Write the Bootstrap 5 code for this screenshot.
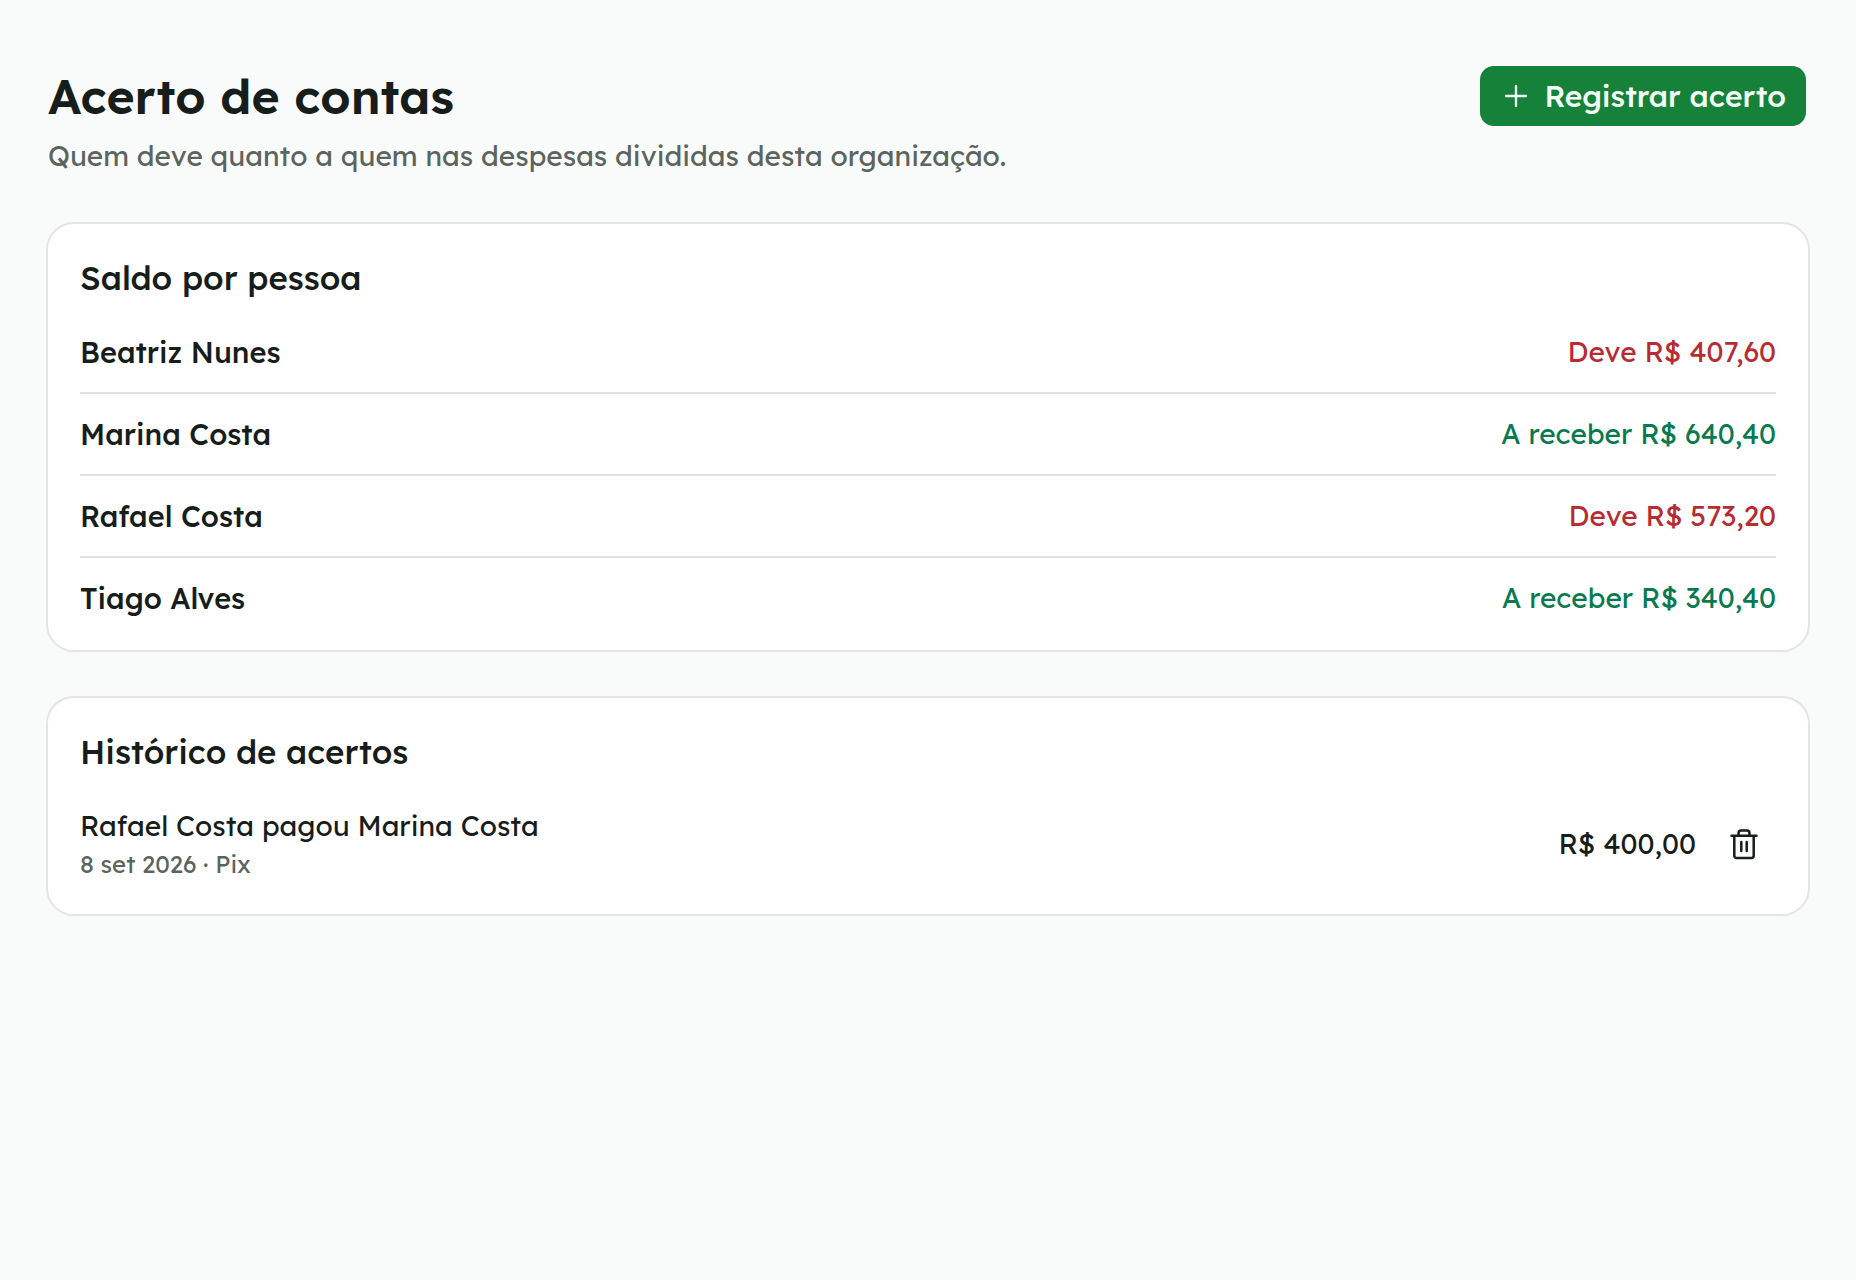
<!DOCTYPE html>
<html lang="pt-BR">
<head>
<meta charset="utf-8">
<meta name="viewport" content="width=device-width, initial-scale=1">
<title>Acerto de contas</title>
<link href="https://cdn.jsdelivr.net/npm/bootstrap@5.3.0/dist/css/bootstrap.min.css" rel="stylesheet">
<style>
  body { background: #f9fbfa; color: #161d1a; font-family: Lexend, Inter, sans-serif; font-size: 28px; line-height: 40px; }
  .page { padding: 66px 46px; }
  .page-head { padding: 0 4px 0 2px; margin-bottom: 46px; }
  .page-title { font-size: 48px; line-height: 60px; font-weight: 600; margin-bottom: 10px; }
  .muted { color: #5c645f; }
  .btn-brand { --bs-btn-color: #f4fff7; --bs-btn-bg: #158139; --bs-btn-hover-color: #fff; --bs-btn-hover-bg: #116c2f; --bs-btn-active-bg: #0e5c28; --bs-btn-active-color: #fff;
    border: 0; border-radius: 14px; padding: 10px 20px; font-size: 30px; line-height: 40px; font-weight: 500; gap: 12px; }
  .panel { --bs-card-border-color: #e2e5e3; --bs-card-border-width: 2px; --bs-card-border-radius: 28px; --bs-card-color: #161d1a; padding: 32px; }
  .panel + .panel { margin-top: 44px; }
  .panel-title { font-size: 33px; line-height: 44px; font-weight: 500; margin-bottom: 32px; }
  .person { padding-bottom: 20px; border-bottom: 2px solid #e0e2e1; margin-bottom: 20px; }
  .person:last-child { padding-bottom: 0; border: 0; margin-bottom: 0; }
  .person-name { font-size: 29px; font-weight: 500; }
  .owes { color: #b72c32; }
  .gets { color: #087a50; }
  .meta { font-size: 24px; line-height: 36px; }
  .btn-trash { width: 64px; height: 64px; padding: 0; border: 0; color: #161d1a; }
</style>
</head>
<body>
<main class="page container-fluid">
  <header class="page-head d-flex justify-content-between align-items-start gap-4">
    <div>
      <h1 class="page-title">Acerto de contas</h1>
      <p class="muted mb-0">Quem deve quanto a quem nas despesas divididas desta organização.</p>
    </div>
    <button type="button" class="btn btn-brand d-flex align-items-center flex-shrink-0">
      <svg width="32" height="32" viewBox="0 0 32 32" fill="none" stroke="currentColor" stroke-width="2.3" stroke-linecap="round" aria-hidden="true"><path d="M16 6v20M6 16h20"/></svg>
      Registrar acerto
    </button>
  </header>

  <section class="card panel">
    <h2 class="panel-title">Saldo por pessoa</h2>
    <ul class="list-unstyled mb-0">
      <li class="person d-flex justify-content-between"><span class="person-name">Beatriz Nunes</span><span class="owes">Deve R$ 407,60</span></li>
      <li class="person d-flex justify-content-between"><span class="person-name">Marina Costa</span><span class="gets">A receber R$ 640,40</span></li>
      <li class="person d-flex justify-content-between"><span class="person-name">Rafael Costa</span><span class="owes">Deve R$ 573,20</span></li>
      <li class="person d-flex justify-content-between"><span class="person-name">Tiago Alves</span><span class="gets">A receber R$ 340,40</span></li>
    </ul>
  </section>

  <section class="card panel">
    <h2 class="panel-title">Histórico de acertos</h2>
    <div class="d-flex justify-content-between align-items-center">
      <div>
        <div>Rafael Costa pagou Marina Costa</div>
        <div class="meta muted">8 set 2026 · Pix</div>
      </div>
      <div class="d-flex align-items-center gap-3">
        <span>R$ 400,00</span>
        <button type="button" class="btn btn-trash d-flex align-items-center justify-content-center" aria-label="Excluir acerto">
          <svg width="32" height="32" viewBox="0 0 32 32" fill="none" stroke="currentColor" stroke-width="2.5" stroke-linecap="round" stroke-linejoin="round" aria-hidden="true"><path d="M3.5 7.7h25M6.3 7.7v20.1a2.2 2.2 0 0 0 2.2 2.2h15a2.2 2.2 0 0 0 2.2-2.2V7.7M10.5 7.7V5.2a2.7 2.7 0 0 1 2.7-2.7h5.6a2.7 2.7 0 0 1 2.7 2.7v2.5M13.3 14v9M18.7 14v9"/></svg>
        </button>
      </div>
    </div>
  </section>
</main>
<script src="https://cdn.jsdelivr.net/npm/bootstrap@5.3.0/dist/js/bootstrap.bundle.min.js"></script>
</body>
</html>
